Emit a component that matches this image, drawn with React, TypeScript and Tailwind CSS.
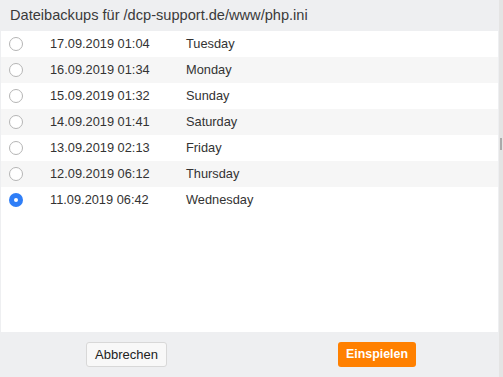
const backups = [
  { date: "17.09.2019 01:04", day: "Tuesday" },
  { date: "16.09.2019 01:34", day: "Monday" },
  { date: "15.09.2019 01:32", day: "Sunday" },
  { date: "14.09.2019 01:41", day: "Saturday" },
  { date: "13.09.2019 02:13", day: "Friday" },
  { date: "12.09.2019 06:12", day: "Thursday" },
  { date: "11.09.2019 06:42", day: "Wednesday" },
];

function Radio({ checked }: { checked: boolean }) {
  if (checked) {
    return (
      <span className="flex h-[14px] w-[14px] items-center justify-center rounded-full bg-[#2f7ef7]">
        <span className="h-[4px] w-[4px] rounded-full bg-white" />
      </span>
    );
  }
  return <span className="h-[14px] w-[14px] rounded-full border border-[#b5b5b5] bg-white" />;
}

export default function App() {
  const selected = 6;

  return (
    <div className="flex h-[377px] w-[503px] bg-[#eeeff1] font-['Liberation_Sans',Arial,sans-serif] text-[#333]">
      <div className="flex w-[498px] flex-col">
        <div className="flex h-[31px] items-center px-[10px] text-[14.6px] text-[#3a3a3a]">
          Dateibackups für /dcp-support.de/www/php.ini
        </div>
        <div className="ml-[1px] flex-1 bg-white">
          {backups.map((b, i) => (
            <div
              key={b.date}
              className={`flex h-[26px] items-center text-[12.8px] ${i % 2 === 1 ? "bg-[#f6f6f6]" : "bg-white"}`}
            >
              <span className="ml-[8px] flex w-[41px]">
                <Radio checked={i === selected} />
              </span>
              <span className="w-[136px]">{b.date}</span>
              <span>{b.day}</span>
            </div>
          ))}
        </div>
        <div className="flex h-[45px] items-center">
          <button className="ml-[86px] h-[25px] w-[81px] rounded-[3px] border border-[#d8d8d8] bg-[#f8f8f8] text-[13px] text-[#222]">
            Abbrechen
          </button>
          <button className="ml-[171px] h-[25px] w-[78px] rounded-[3px] bg-[#ff8000] text-[12.4px] font-semibold text-white">
            Einspielen
          </button>
        </div>
      </div>
      <div className="relative ml-[1px] w-[4px] bg-[#e4e4e4]">
        <div className="absolute left-[1px] top-[138px] h-[12px] w-[2px] bg-[#aaa]" />
      </div>
    </div>
  );
}
